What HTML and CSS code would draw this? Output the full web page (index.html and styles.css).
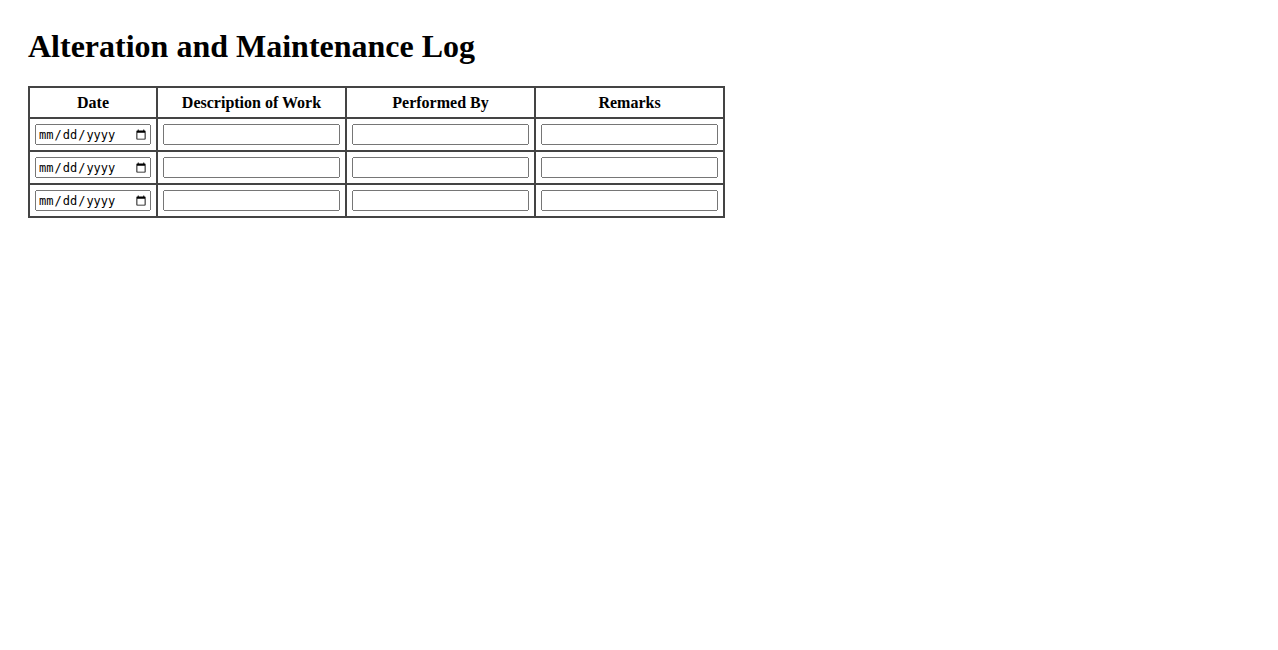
FILE: index.html
```html
<!DOCTYPE html>
<html>
<head>
<meta charset="utf-8">
<title>Alteration and Maintenance Log</title>
<link rel="stylesheet" href="styles.css">
</head>
<body>
<h1 class="title">Alteration and Maintenance Log</h1>
<table class="log">
  <thead>
    <tr>
      <th>Date</th>
      <th>Description of Work</th>
      <th>Performed By</th>
      <th>Remarks</th>
    </tr>
  </thead>
  <tbody>
    <tr>
      <td><input type="date" class="date-in"></td>
      <td><input type="text" class="text-in"></td>
      <td><input type="text" class="text-in"></td>
      <td><input type="text" class="text-in"></td>
    </tr>
    <tr>
      <td><input type="date" class="date-in"></td>
      <td><input type="text" class="text-in"></td>
      <td><input type="text" class="text-in"></td>
      <td><input type="text" class="text-in"></td>
    </tr>
    <tr>
      <td><input type="date" class="date-in"></td>
      <td><input type="text" class="text-in"></td>
      <td><input type="text" class="text-in"></td>
      <td><input type="text" class="text-in"></td>
    </tr>
  </tbody>
</table>
</body>
</html>
```
FILE: styles.css
```css
body {
  margin: 0;
  padding: 28px;
  font-family: "Liberation Serif", "Times New Roman", serif;
  background: #fff;
  color: #000;
}

.title {
  font-size: 32px;
  font-weight: bold;
  margin: 0 0 21px;
}

.log {
  border-collapse: collapse;
  border: 2px solid #444;
}

.log th,
.log td {
  border: 2px solid #444;
  padding: 5px;
}

.log th {
  font-size: 16px;
  font-weight: bold;
  text-align: center;
  padding-top: 6px;
  padding-bottom: 5px;
}

.date-in {
  box-sizing: border-box;
  width: 116px;
  height: 21px;
  display: block;
  font-size: 12px;
}

.text-in {
  box-sizing: border-box;
  width: 177px;
  height: 21px;
  display: block;
}
```
